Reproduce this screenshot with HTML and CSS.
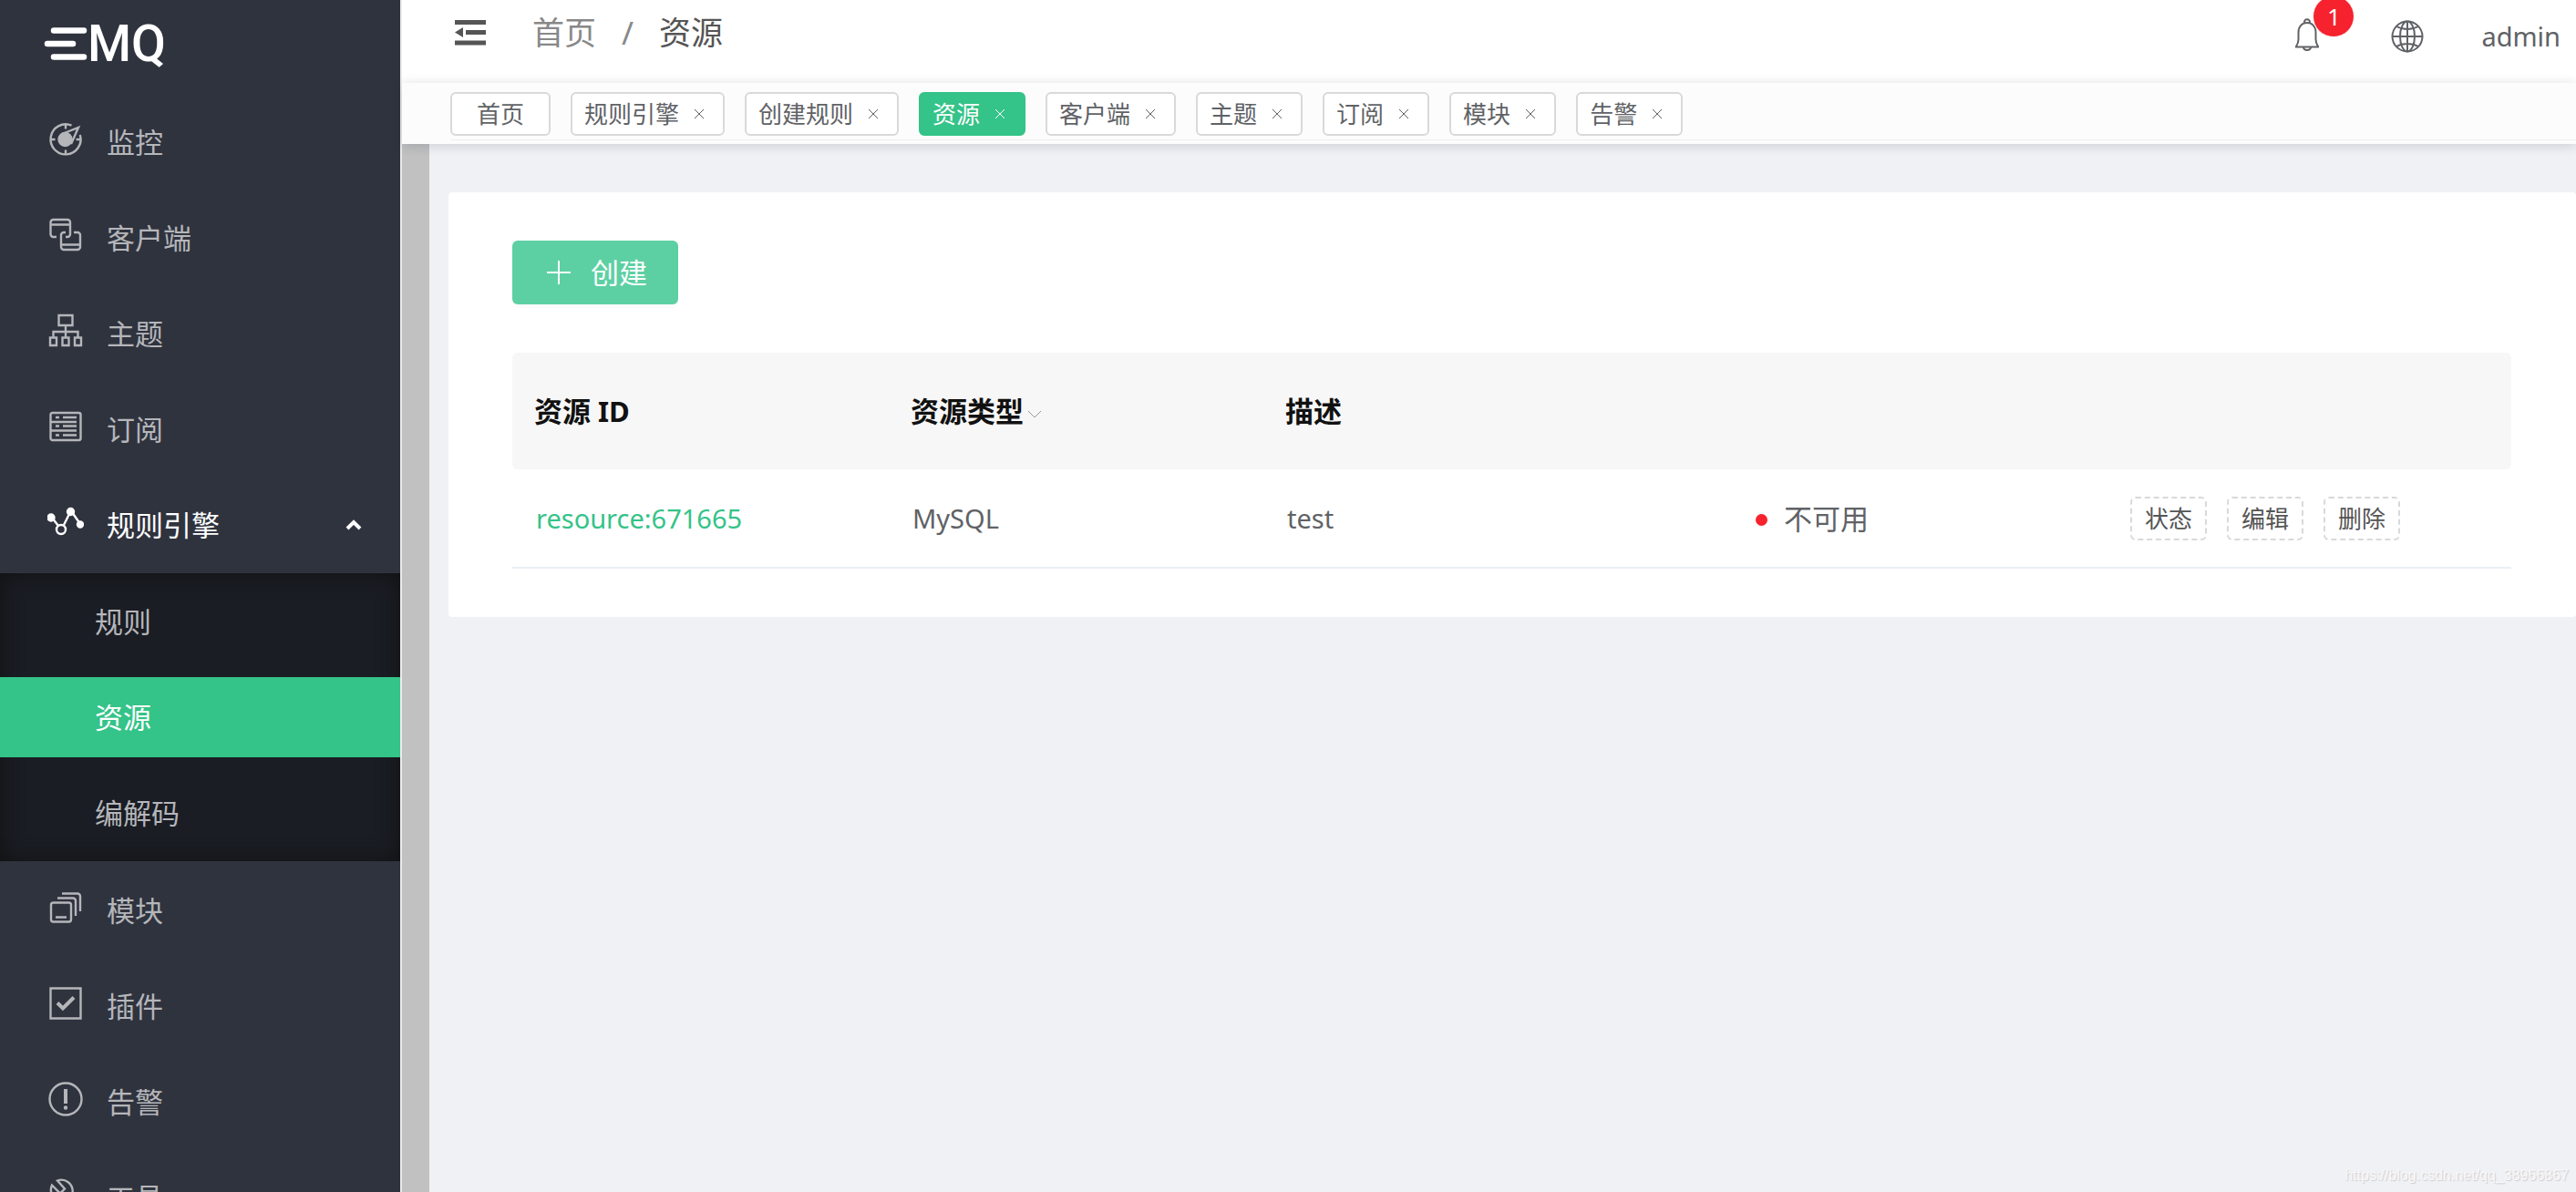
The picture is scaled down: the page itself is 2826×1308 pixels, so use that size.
FILE: index.html
```html
<!DOCTYPE html>
<html lang="zh-CN">
<head>
  <meta charset="UTF-8">
  <meta name="viewport" content="width=device-width, initial-scale=1.0">
  <title>资源</title>
  <link rel="stylesheet" href="styles.css">
</head>
<body>

<div class="app">
  <aside class="sidebar">
    <a class="logo" href="#">
      <svg width="48" height="40" viewBox="0 0 48 40" stroke="currentColor" stroke-width="6.5" stroke-linecap="round">
        <path d="M11 5.500h33M4 20h28M11 34.500h33"/>
      </svg>
      <span>MQ</span>
    </a>

    <nav class="menu">
      <a class="menu-item" href="#">
        <svg class="icon" viewBox="0 0 40 40">
          <path d="M26.500 4.700A16.500 16.500 0 1 0 35.800 15M20 3.500v5M20 36.500v-5M3.500 20h5M36.500 20h-5"/>
          <path d="M16 14 34 7 26 25"/>
          <circle cx="19.500" cy="20" r="7" class="fill"/>
        </svg>
        监控
      </a>
      <a class="menu-item" href="#">
        <svg class="icon" viewBox="0 0 40 40">
          <path d="M10 22H6.500a3 3 0 0 1-3-3V6a3 3 0 0 1 3-3H22a3 3 0 0 1 3 3v13a3 3 0 0 1-3 3h-2M3.500 8.500H25"/>
          <path d="M20 17h-2a3 3 0 0 0-3 3v13a3 3 0 0 0 3 3h15a3 3 0 0 0 3-3V20a3 3 0 0 0-3-3h-4M15 30.500h21"/>
        </svg>
        客户端
      </a>
      <a class="menu-item" href="#">
        <svg class="icon" viewBox="0 0 40 40">
          <path d="M12.500 3h15v11h-15zM20 14v13M6.500 27v-6h27v6M3 27.500h7V36H3zM16.500 27.500h7V36h-7zM30 27.500h7V36h-7z"/>
        </svg>
        主题
      </a>
      <a class="menu-item" href="#">
        <svg class="icon" viewBox="0 0 40 40">
          <rect x="3.500" y="5" width="33" height="30" rx="2"/>
          <path d="M4 15h28M4 24.500h28M9 10h4M17 10h15M9 19.500h4M17 19.500h15M9 29.500h4M17 29.500h15"/>
        </svg>
        订阅
      </a>
      <a class="menu-item open" href="#">
        <svg class="icon" viewBox="0 0 40 40">
          <path d="M5 15l7 9M18 23l7-14M27 9l9 13"/>
          <circle cx="15" cy="28" r="5"/>
          <circle cx="4" cy="15" r="3.500" class="fill"/>
          <circle cx="25.500" cy="8.500" r="3.500" class="fill"/>
          <circle cx="36" cy="22.500" r="3" class="fill"/>
        </svg>
        规则引擎
        <svg class="arrow" viewBox="0 0 18 12"><path d="M2 10l7-7 7 7"/></svg>
      </a>
      <div class="submenu">
        <a href="#">规则</a>
        <a href="#" class="active">资源</a>
        <a href="#">编解码</a>
      </div>
      <a class="menu-item" href="#">
        <svg class="icon" viewBox="0 0 40 40">
          <rect x="4" y="14.500" width="22" height="21" rx="2.500"/>
          <path d="M9 30.500h12M11 9.500h17a3 3 0 0 1 3 3V29M16 4.500h17a3 3 0 0 1 3 3V24"/>
        </svg>
        模块
      </a>
      <a class="menu-item" href="#">
        <svg class="icon" viewBox="0 0 40 40">
          <path d="M3.500 3.500h33v33h-33z"/>
          <path d="M11 19.500l6 6 12-12" stroke-width="4"/>
        </svg>
        插件
      </a>
      <a class="menu-item" href="#">
        <svg class="icon" viewBox="0 0 40 40">
          <circle cx="20" cy="20" r="17.500"/>
          <path d="M20 9v16" stroke-width="4"/>
          <circle cx="20" cy="29.500" r="1" class="fill"/>
        </svg>
        告警
      </a>
      <a class="menu-item" href="#">
        <svg class="icon" viewBox="0 0 40 40">
          <path d="M11 4.500c8-3 18 3 16.500 14L37 29l-7 7-11-10C9 28 1 19 5 9.500l9 9 5-5z"/>
        </svg>
        工具
      </a>
    </nav>
  </aside>

  <div class="main">
    <header class="header">
      <div class="header-left">
        <button class="icon-button" type="button" aria-label="收起菜单">
          <svg width="34" height="28" viewBox="0 0 34 28" fill="currentColor">
            <path d="M0 0h34v5H0zM12 11h22v5H12zM0 22.500h34v5H0zM0 13.500l9-5.500v11z"/>
          </svg>
        </button>
        <nav class="breadcrumb">
          <a href="#">首页</a>
          <span class="slash">/</span>
          <span class="current">资源</span>
        </nav>
      </div>
      <div class="header-right">
        <button class="icon-button bell" type="button" aria-label="告警">
          <svg width="28" height="36" viewBox="0 0 28 36" fill="none" stroke="currentColor" stroke-width="2">
            <path d="M1 31.500h26M2 31c2-3 2.500-5 2.500-8v-7.500C4.500 9 8.500 5 14 5s9.500 4 9.500 10.500V23c0 3 .5 5 2.500 8"/>
            <path d="M11 5c-.5-5 6.500-5 6 0M10 32c.5 4 7.500 4 8 0"/>
          </svg>
          <span class="badge">1</span>
        </button>
        <button class="icon-button" type="button" aria-label="语言">
          <svg width="36" height="36" viewBox="0 0 36 36" fill="none" stroke="currentColor" stroke-width="2">
            <circle cx="18" cy="18" r="16.500"/>
            <ellipse cx="18" cy="18" rx="8" ry="16.500"/>
            <path d="M18 1.500v33M1.500 18h33M6 7c7 4 17 4 24 0M6 29c7-4 17-4 24 0"/>
          </svg>
        </button>
        <a class="user" href="#">admin</a>
      </div>
    </header>

    <div class="tabs">
      <div class="tabs-list">
        <div class="tab home"><a href="#">首页</a></div>
        <div class="tab"><a href="#">规则引擎</a><button type="button" aria-label="关闭"><svg viewBox="0 0 10 12"><path d="M0 1l10 10M10 1L0 11"/></svg></button></div>
        <div class="tab"><a href="#">创建规则</a><button type="button" aria-label="关闭"><svg viewBox="0 0 10 12"><path d="M0 1l10 10M10 1L0 11"/></svg></button></div>
        <div class="tab active"><a href="#">资源</a><button type="button" aria-label="关闭"><svg viewBox="0 0 10 12"><path d="M0 1l10 10M10 1L0 11"/></svg></button></div>
        <div class="tab"><a href="#">客户端</a><button type="button" aria-label="关闭"><svg viewBox="0 0 10 12"><path d="M0 1l10 10M10 1L0 11"/></svg></button></div>
        <div class="tab"><a href="#">主题</a><button type="button" aria-label="关闭"><svg viewBox="0 0 10 12"><path d="M0 1l10 10M10 1L0 11"/></svg></button></div>
        <div class="tab"><a href="#">订阅</a><button type="button" aria-label="关闭"><svg viewBox="0 0 10 12"><path d="M0 1l10 10M10 1L0 11"/></svg></button></div>
        <div class="tab"><a href="#">模块</a><button type="button" aria-label="关闭"><svg viewBox="0 0 10 12"><path d="M0 1l10 10M10 1L0 11"/></svg></button></div>
        <div class="tab"><a href="#">告警</a><button type="button" aria-label="关闭"><svg viewBox="0 0 10 12"><path d="M0 1l10 10M10 1L0 11"/></svg></button></div>
      </div>
    </div>

    <div class="body">
      <div class="scroll-track"></div>
      <main class="content">
        <section class="card">
          <button class="create" type="button">
            <svg width="26" height="26" viewBox="0 0 26 26" stroke="currentColor" stroke-width="2"><path d="M13 0v26M0 13h26"/></svg>
            创建
          </button>

          <table class="resources">
            <colgroup>
              <col class="col-id"><col class="col-type"><col class="col-desc"><col class="col-status"><col>
            </colgroup>
            <thead>
              <tr>
                <th>资源 ID</th>
                <th>资源类型<svg class="caret" viewBox="0 0 16 10"><path d="M1 1l7 7 7-7"/></svg></th>
                <th>描述</th>
                <th></th>
                <th></th>
              </tr>
            </thead>
            <tbody>
              <tr>
                <td><a href="#">resource:671665</a></td>
                <td>MySQL</td>
                <td>test</td>
                <td><span class="status">不可用</span></td>
                <td>
                  <div class="actions">
                    <button type="button">状态</button>
                    <button type="button">编辑</button>
                    <button type="button">删除</button>
                  </div>
                </td>
              </tr>
            </tbody>
          </table>
        </section>
      </main>
    </div>
  </div>

  <div class="watermark">https://blog.csdn.net/qq_38966867</div>
</div>

</body>
</html>
```

FILE: styles.css
```css
* { box-sizing:border-box; margin:0; padding:0; }

body { font-family:"Noto Sans", "Noto Sans CJK SC", sans-serif; font-size:31px; line-height:44px; color:#606266; background:#f0f1f5; }
a { color:inherit; text-decoration:none; }
button { font:inherit; color:inherit; background:none; border:none; cursor:pointer; }
svg { display:block; flex:none; }

.app { position:relative; display:flex; height:100vh; overflow:hidden; }

/* sidebar */
.sidebar { flex:none; width:441px; overflow:hidden; color:#b5b6ba; background:#2f333e; border-right:2px solid #ebebed; }

.logo { display:flex; align-items:center; height:96px; padding-left:48px; color:#fff; font-family:Roboto, sans-serif; font-size:55px; font-weight:500; }

.menu { padding-top:8px; }
.menu-item { display:flex; align-items:center; height:105px; padding:0 42px 2px 52px; }
.menu-item.open { color:#fff; }

.icon { width:40px; height:40px; margin:0 25px 6px 0; fill:none; stroke:currentColor; stroke-width:2.4; }
.icon .fill { fill:currentColor; }
.arrow { width:18px; height:12px; margin-left:auto; fill:none; stroke:currentColor; stroke-width:4; }

.submenu { display:flex; flex-direction:column; gap:17px; margin-bottom:2px; padding:9px 0; background:#1a1d24; box-shadow:inset 0 0 24px #111; }
.submenu a { height:88px; padding-left:104px; line-height:88px; }
.submenu .active { color:#fff; background:#34c388; }

/* header */
.main { flex:1; display:flex; flex-direction:column; min-width:0; }

.header { display:flex; justify-content:space-between; height:91px; padding:0 17px 0 58px; background:#fff; }
.header-left { display:flex; align-items:center; gap:51px; height:72px; color:#555; }
.header-right { display:flex; align-items:center; height:80px; }

.icon-button { position:relative; }
.bell { margin:0 78px 4px 0; }
.badge { position:absolute; left:20px; top:-25px; width:46px; height:46px; border:1px solid #fff; border-radius:50%; color:#fff; background:#f6222d; font-size:26px; line-height:44px; text-align:center; }
.user { margin-left:63px; font-size:29px; }

.breadcrumb { display:flex; font-size:35px; line-height:48px; color:#888; }
.slash { margin:0 28px; }
.current { color:#555; }

/* open pages */
.tabs { position:relative; z-index:1; height:67px; padding:10px 0 4px 53px; background:#fcfcfc; box-shadow:0 2px 12px rgba(0, 21, 41, .16); }
.tabs-list { display:flex; align-items:flex-start; gap:22px; height:53px; border-bottom:1px solid #eee; }
.tab { display:flex; align-items:center; height:48px; padding:0 0 0 13px; border:2px solid #d9d9d9; border-radius:6px; background:#fff; font-size:26px; }
.tab.home { padding:0 27px; }
.tab.active { color:#fff; background:#34c388; border-color:#34c388; }
.tab button { padding:0 21px 0 17px; }
.tab svg { width:10px; height:12px; fill:none; stroke:currentColor; stroke-width:1; }

/* page */
.body { flex:1; display:flex; min-height:0; }
.scroll-track { flex:none; width:30px; background:#c1c1c1; }
.content { flex:1; min-width:0; padding:53px 0 0 21px; }

.card { padding:53px 71px 53px 70px; border-radius:4px; background:#fff; }

.create { display:flex; align-items:center; gap:22px; height:70px; padding:0 34px 0 38px; border-radius:6px; color:#fff; background:#5dd0a3; box-shadow:0 4px 0 rgba(0, 0, 0, .01); }

.resources { width:100%; margin-top:53px; table-layout:fixed; border-collapse:separate; border-spacing:0; }
.col-id { width:413px; }
.col-type { width:411px; }
.col-desc { width:514px; }
.col-status { width:411px; }
.resources th { height:128px; padding-left:24px; text-align:left; font-weight:700; color:#111; background:#f7f7f7; }
.resources th:first-child { border-radius:6px 0 0 6px; }
.resources th:last-child { border-radius:0 6px 6px 0; }
.resources td { height:109px; padding-left:26px; border-bottom:2px solid #ebeef5; font-size:29px; }
.resources td a { color:#34c388; }

.caret { display:inline-block; width:16px; height:10px; margin:0 0 3px 4px; fill:none; stroke:#999; stroke-width:1; }

.status { display:flex; align-items:center; gap:18px; font-size:31px; }
.status::before { content:""; width:13px; height:13px; margin-top:4px; border-radius:50%; background:#f6222d; }

.actions { display:flex; gap:22px; }
.actions button { height:48px; padding:0 14px; border:2px dashed #d9d9d9; border-radius:6px; color:#555; font-size:26px; line-height:44px; }

.watermark { position:absolute; right:8px; bottom:8px; font:16px/20px "Liberation Sans", sans-serif; color:#f8f8fa; text-shadow:1px 1px 1px #ccc; }
```
